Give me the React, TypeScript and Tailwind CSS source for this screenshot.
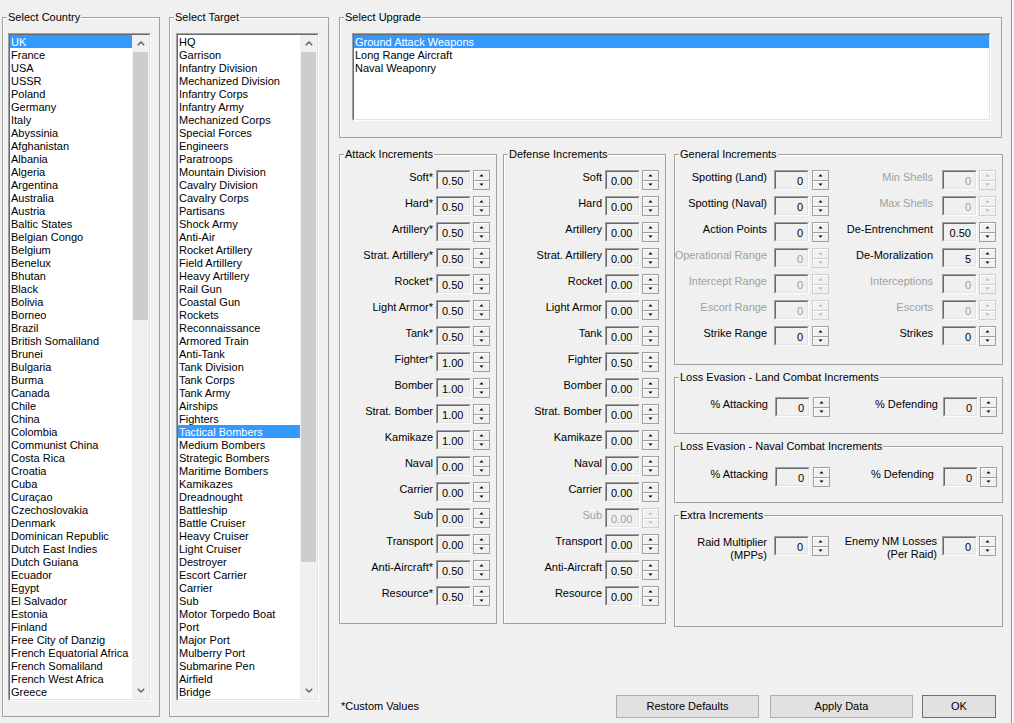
import clsx from "clsx";
import type { ReactNode } from "react";

const countries = [
  "UK", "France", "USA", "USSR", "Poland", "Germany", "Italy", "Abyssinia", "Afghanistan", "Albania",
  "Algeria", "Argentina", "Australia", "Austria", "Baltic States", "Belgian Congo", "Belgium", "Benelux",
  "Bhutan", "Black", "Bolivia", "Borneo", "Brazil", "British Somaliland", "Brunei", "Bulgaria", "Burma",
  "Canada", "Chile", "China", "Colombia", "Communist China", "Costa Rica", "Croatia", "Cuba", "Curaçao",
  "Czechoslovakia", "Denmark", "Dominican Republic", "Dutch East Indies", "Dutch Guiana", "Ecuador", "Egypt",
  "El Salvador", "Estonia", "Finland", "Free City of Danzig", "French Equatorial Africa", "French Somaliland",
  "French West Africa", "Greece",
];

const targets = [
  "HQ", "Garrison", "Infantry Division", "Mechanized Division", "Infantry Corps", "Infantry Army",
  "Mechanized Corps", "Special Forces", "Engineers", "Paratroops", "Mountain Division", "Cavalry Division",
  "Cavalry Corps", "Partisans", "Shock Army", "Anti-Air", "Rocket Artillery", "Field Artillery",
  "Heavy Artillery", "Rail Gun", "Coastal Gun", "Rockets", "Reconnaissance", "Armored Train", "Anti-Tank",
  "Tank Division", "Tank Corps", "Tank Army", "Airships", "Fighters", "Tactical Bombers", "Medium Bombers",
  "Strategic Bombers", "Maritime Bombers", "Kamikazes", "Dreadnought", "Battleship", "Battle Cruiser",
  "Heavy Cruiser", "Light Cruiser", "Destroyer", "Escort Carrier", "Carrier", "Sub", "Motor Torpedo Boat",
  "Port", "Major Port", "Mulberry Port", "Submarine Pen", "Airfield", "Bridge",
];

const upgrades = ["Ground Attack Weapons", "Long Range Aircraft", "Naval Weaponry"];

type Inc = { label: ReactNode; value: string; disabled?: boolean };

const attack: Inc[] = [
  { label: "Soft*", value: "0.50" },
  { label: "Hard*", value: "0.50" },
  { label: "Artillery*", value: "0.50" },
  { label: "Strat. Artillery*", value: "0.50" },
  { label: "Rocket*", value: "0.50" },
  { label: "Light Armor*", value: "0.50" },
  { label: "Tank*", value: "0.50" },
  { label: "Fighter*", value: "1.00" },
  { label: "Bomber", value: "1.00" },
  { label: "Strat. Bomber", value: "1.00" },
  { label: "Kamikaze", value: "1.00" },
  { label: "Naval", value: "0.00" },
  { label: "Carrier", value: "0.00" },
  { label: "Sub", value: "0.00" },
  { label: "Transport", value: "0.00" },
  { label: "Anti-Aircraft*", value: "0.50" },
  { label: "Resource*", value: "0.50" },
];

const defense: Inc[] = [
  { label: "Soft", value: "0.00" },
  { label: "Hard", value: "0.00" },
  { label: "Artillery", value: "0.00" },
  { label: "Strat. Artillery", value: "0.00" },
  { label: "Rocket", value: "0.00" },
  { label: "Light Armor", value: "0.00" },
  { label: "Tank", value: "0.00" },
  { label: "Fighter", value: "0.50" },
  { label: "Bomber", value: "0.00" },
  { label: "Strat. Bomber", value: "0.00" },
  { label: "Kamikaze", value: "0.00" },
  { label: "Naval", value: "0.00" },
  { label: "Carrier", value: "0.00" },
  { label: "Sub", value: "0.00", disabled: true },
  { label: "Transport", value: "0.00" },
  { label: "Anti-Aircraft", value: "0.50" },
  { label: "Resource", value: "0.00" },
];

const general: [Inc, Inc][] = [
  [{ label: "Spotting (Land)", value: "0" }, { label: "Min Shells", value: "0", disabled: true }],
  [{ label: "Spotting (Naval)", value: "0" }, { label: "Max Shells", value: "0", disabled: true }],
  [{ label: "Action Points", value: "0" }, { label: "De-Entrenchment", value: "0.50" }],
  [{ label: "Operational Range", value: "0", disabled: true }, { label: "De-Moralization", value: "5" }],
  [{ label: "Intercept Range", value: "0", disabled: true }, { label: "Interceptions", value: "0", disabled: true }],
  [{ label: "Escort Range", value: "0", disabled: true }, { label: "Escorts", value: "0", disabled: true }],
  [{ label: "Strike Range", value: "0" }, { label: "Strikes", value: "0" }],
];

function GroupBox({ title, className, children }: { title: string; className?: string; children?: ReactNode }) {
  return (
    <div className={clsx("relative border border-[#a0a0a0] shadow-[inset_1px_1px_0_#ffffff]", className)}>
      <span className="absolute -top-[7px] left-[4px] px-[1px] leading-[13px] bg-[#f0f0f0] whitespace-nowrap">
        {title}
      </span>
      {children}
    </div>
  );
}

function Chevron({ down }: { down?: boolean }) {
  return (
    <svg width="8" height="5" viewBox="0 0 8 5">
      <polyline
        points={down ? "0.8,0.8 4,4 7.2,0.8" : "0.8,4.2 4,1 7.2,4.2"}
        fill="none"
        stroke="#606060"
        strokeWidth="1.4"
      />
    </svg>
  );
}

function ListBox({
  items,
  selected,
  className,
  thumbClass,
}: {
  items: string[];
  selected: number;
  className?: string;
  thumbClass?: string;
}) {
  return (
    <div className={clsx("border border-t-[#a0a0a0] border-l-[#a0a0a0] border-r-white border-b-white", className)}>
      <div className="h-full flex bg-white border border-t-[#696969] border-l-[#696969] border-r-[#e3e3e3] border-b-[#e3e3e3]">
        <div className="flex-1 overflow-hidden">
          {items.map((item, i) => (
            <div
              key={item}
              className={clsx(
                "h-[13px] pt-[1px] leading-[12px] pl-[1px] whitespace-nowrap",
                i === selected && "bg-[#3399ff] text-white",
              )}
            >
              {item}
            </div>
          ))}
        </div>
        {thumbClass && (
          <div className="w-[17px] flex flex-col bg-[#f0f0f0]">
            <div className="h-[17px] flex items-center justify-center">
              <Chevron />
            </div>
            <div className="flex-1">
              <div className={clsx("mx-[1px] bg-[#cdcdcd]", thumbClass)} />
            </div>
            <div className="h-[17px] flex items-center justify-center">
              <Chevron down />
            </div>
          </div>
        )}
      </div>
    </div>
  );
}

function Field({ value, disabled, right, className }: { value: string; disabled?: boolean; right?: boolean; className?: string }) {
  return (
    <div className={clsx("w-[35px] h-[20px] shrink-0 border border-t-[#a0a0a0] border-l-[#a0a0a0] border-r-white border-b-white", className)}>
      <div
        className={clsx(
          "h-full flex items-center pt-[2px] leading-[13px] border border-t-[#696969] border-l-[#696969] border-r-[#e3e3e3] border-b-[#e3e3e3]",
          right ? "justify-end pr-[4px]" : "pl-[4px]",
          disabled ? "text-[#a0a0a0]" : "text-black",
        )}
      >
        {value}
      </div>
    </div>
  );
}

function Arrow({ down, disabled }: { down?: boolean; disabled?: boolean }) {
  return (
    <svg width="5" height="3" viewBox="0 0 5 3">
      <polygon points={down ? "0.5,0.5 4.5,0.5 2.5,2.7" : "2.5,0.3 4.5,2.5 0.5,2.5"} fill={disabled ? "#b4b4b4" : "#000000"} />
    </svg>
  );
}

function Spin({ disabled, className }: { disabled?: boolean; className?: string }) {
  const half = clsx(
    "flex-1 flex items-center justify-center bg-[#f0f0f0] border shadow-[inset_1px_1px_0_#ffffff]",
    disabled ? "border-[#cfcfcf]" : "border-[#a0a0a0]",
  );
  return (
    <div className={clsx("w-[17px] h-[20px] shrink-0 flex flex-col", className)}>
      <div className={half}>
        <Arrow disabled={disabled} />
      </div>
      <div className={clsx(half, "border-t-0")}>
        <Arrow down disabled={disabled} />
      </div>
    </div>
  );
}

function Label({ children, disabled, className }: { children: ReactNode; disabled?: boolean; className?: string }) {
  return (
    <span className={clsx("flex justify-end mt-[1px] leading-[13px] whitespace-nowrap text-right", disabled && "text-[#a0a0a0]", className)}>
      {children}
    </span>
  );
}

function IncRow({ item }: { item: Inc }) {
  return (
    <div className="h-[26px] flex justify-end items-start pr-[6px]">
      <Label disabled={item.disabled} className="mr-[3px]">
        {item.label}
      </Label>
      <Field value={item.value} disabled={item.disabled} />
      <Spin disabled={item.disabled} className="ml-[2px]" />
    </div>
  );
}

function PairRow({
  left,
  right,
  leftW = "w-[92px]",
  rightW = "w-[104px]",
  rightGap = "ml-[9px]",
}: {
  left: Inc;
  right: Inc;
  leftW?: string;
  rightW?: string;
  rightGap?: string;
}) {
  return (
    <div className="h-[26px] flex items-start">
      <Label disabled={left.disabled} className={leftW}>
        {left.label}
      </Label>
      <Field value={left.value} disabled={left.disabled} right className="ml-[7px]" />
      <Spin disabled={left.disabled} className="ml-[3px]" />
      <Label disabled={right.disabled} className={rightW}>
        {right.label}
      </Label>
      <Field value={right.value} disabled={right.disabled} right className={rightGap} />
      <Spin disabled={right.disabled} className="ml-[2px]" />
    </div>
  );
}

function Button({ children, className }: { children: ReactNode; className?: string }) {
  return (
    <div className={clsx("h-[23px] flex items-center justify-center bg-[#e1e1e1] border", className)}>{children}</div>
  );
}

export default function App() {
  return (
    <div className="w-[1014px] h-[723px] flex overflow-hidden bg-[#f0f0f0] text-black text-[11px] font-['Liberation_Sans',Arial,sans-serif]">
      <div className="w-[1011px] h-full flex pt-[17px] pl-[2px]">
        <GroupBox title="Select Country" className="w-[158px] h-[700px] pl-[5px] pt-[15px]">
          <ListBox items={countries} selected={0} className="w-[143px] h-[668px]" thumbClass="h-[268px]" />
        </GroupBox>

        <GroupBox title="Select Target" className="ml-[9px] w-[160px] h-[700px] pl-[6px] pt-[15px]">
          <ListBox items={targets} selected={30} className="w-[143px] h-[668px]" thumbClass="h-[510px]" />
        </GroupBox>

        <div className="ml-[10px] w-[664px] flex flex-col">
          <GroupBox title="Select Upgrade" className="w-[663px] h-[121px] pl-[12px] pt-[15px]">
            <ListBox items={upgrades} selected={0} className="w-[639px] h-[88px]" />
          </GroupBox>

          <div className="mt-[16px] h-[473px] flex items-start">
            <GroupBox title="Attack Increments" className="w-[158px] h-[470px] pt-[15px]">
              {attack.map((it) => (
                <IncRow key={String(it.label)} item={it} />
              ))}
            </GroupBox>

            <GroupBox title="Defense Increments" className="ml-[6px] w-[163px] h-[470px] pt-[15px]">
              {defense.map((it) => (
                <IncRow key={String(it.label)} item={it} />
              ))}
            </GroupBox>

            <div className="ml-[8px] w-[329px] flex flex-col">
              <GroupBox title="General Increments" className="h-[211px] pt-[15px]">
                {general.map(([l, r]) => (
                  <PairRow key={String(l.label)} left={l} right={r} />
                ))}
              </GroupBox>

              <GroupBox title="Loss Evasion - Land Combat Increments" className="mt-[12px] h-[57px] pt-[19px]">
                <PairRow
                  left={{ label: "% Attacking", value: "0" }}
                  right={{ label: "% Defending", value: "0" }}
                  leftW="w-[93px]"
                  rightW="w-[108px]"
                  rightGap="ml-[5px]"
                />
              </GroupBox>

              <GroupBox title="Loss Evasion - Naval Combat Increments" className="mt-[12px] h-[57px] pt-[20px]">
                <PairRow
                  left={{ label: "% Attacking", value: "0" }}
                  right={{ label: "% Defending", value: "0" }}
                  leftW="w-[93px]"
                  rightW="w-[104px]"
                />
              </GroupBox>

              <GroupBox title="Extra Increments" className="mt-[12px] h-[112px] pt-[20px]">
                <PairRow
                  left={{
                    label: (
                      <span className="-mt-[1px]">
                        Raid Multiplier
                        <br />
                        (MPPs)
                      </span>
                    ),
                    value: "0",
                  }}
                  right={{
                    label: (
                      <span className="-mt-[2px]">
                        Enemy NM Losses
                        <br />
                        (Per Raid)
                      </span>
                    ),
                    value: "0",
                  }}
                  rightW="w-[108px]"
                  rightGap="ml-[5px]"
                />
              </GroupBox>
            </div>
          </div>

          <div className="mt-[68px] h-[23px] flex items-center pr-[7px]">
            <span className="ml-[2px] leading-[13px]">*Custom Values</span>
            <Button className="ml-auto w-[143px] border-[#adadad]">Restore Defaults</Button>
            <Button className="ml-[11px] w-[143px] border-[#adadad]">Apply Data</Button>
            <Button className="ml-[9px] w-[74px] border-[#707070]">OK</Button>
          </div>
        </div>
      </div>
      <div className="w-px h-full bg-[#c98a5c]" />
      <div className="flex-1 h-full bg-[#f7f7f7]" />
    </div>
  );
}
